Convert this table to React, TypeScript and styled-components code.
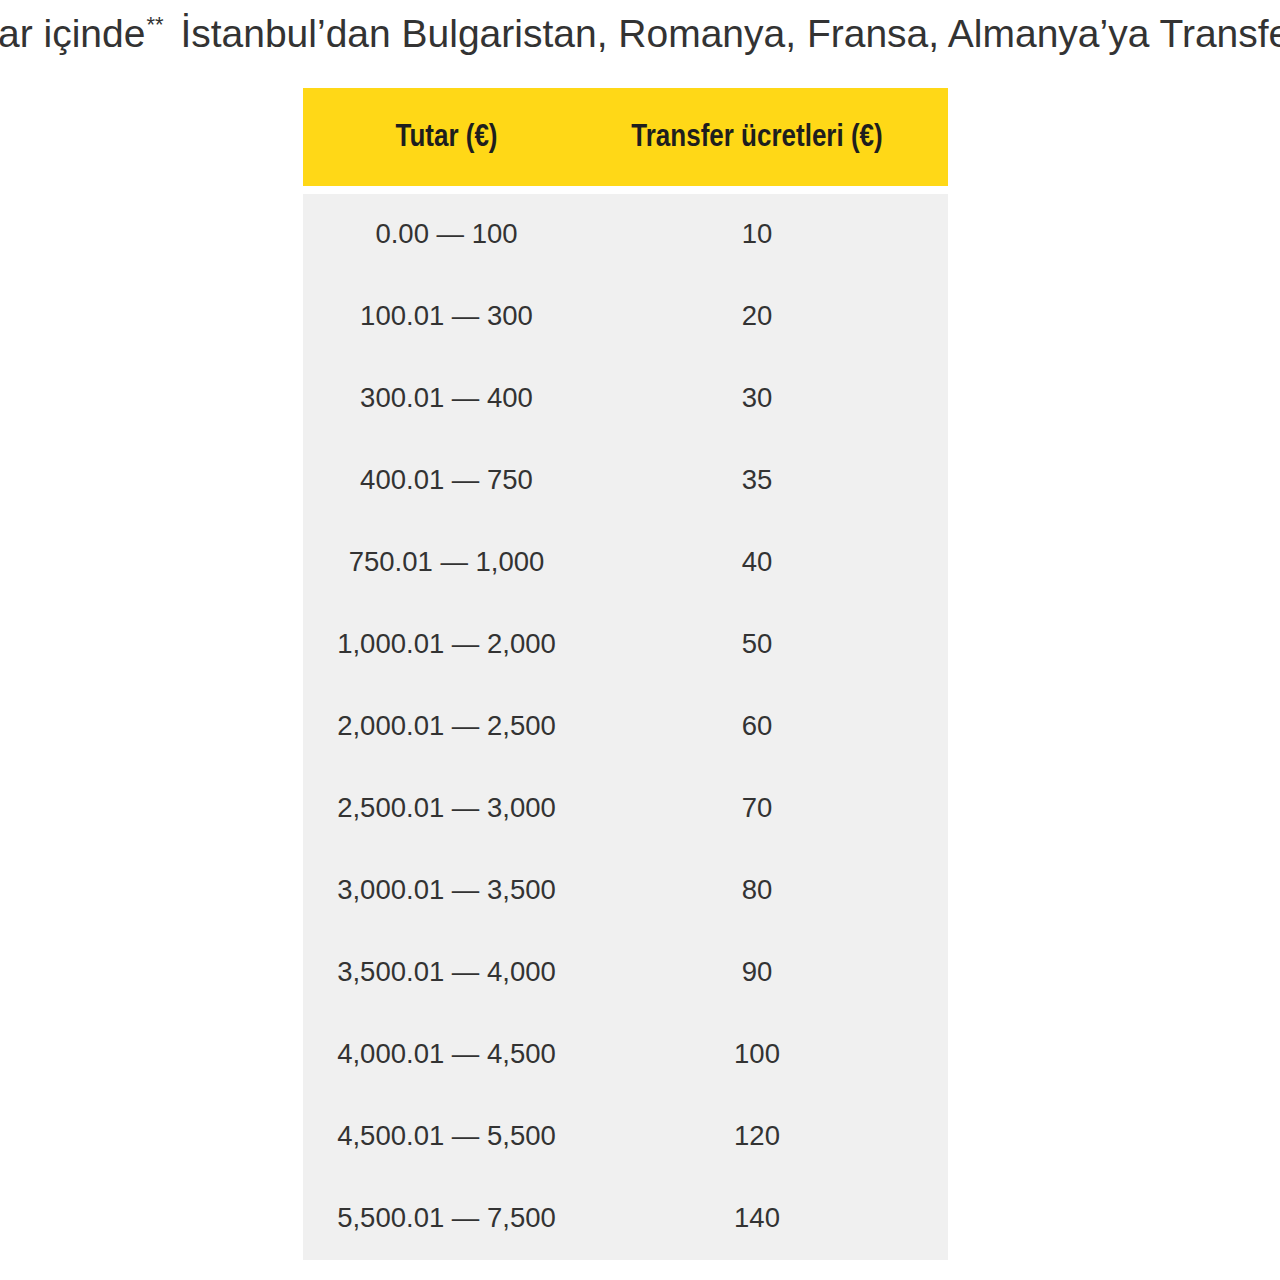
import React from "react";
import styled, { createGlobalStyle } from "styled-components";

const rows: [string, string][] = [
  ["0.00 — 100", "10"],
  ["100.01 — 300", "20"],
  ["300.01 — 400", "30"],
  ["400.01 — 750", "35"],
  ["750.01 — 1,000", "40"],
  ["1,000.01 — 2,000", "50"],
  ["2,000.01 — 2,500", "60"],
  ["2,500.01 — 3,000", "70"],
  ["3,000.01 — 3,500", "80"],
  ["3,500.01 — 4,000", "90"],
  ["4,000.01 — 4,500", "100"],
  ["4,500.01 — 5,500", "120"],
  ["5,500.01 — 7,500", "140"],
];

const App = () => {
  return (
    <>
      <GlobalStyle />
      <Page>
        <Heading>
          ar içinde<Sup>**</Sup> İstanbul’dan Bulgaristan, Romanya, Fransa, Almanya’ya Transfer
        </Heading>
        <FeeTable>
          <HeadRow>
            <HeadCell>
              <HeadText>Tutar (€)</HeadText>
            </HeadCell>
            <HeadCell>
              <HeadText>Transfer ücretleri (€)</HeadText>
            </HeadCell>
          </HeadRow>
          <Body>
            {rows.map(([range, fee]) => (
              <Row key={range}>
                <Cell>{range}</Cell>
                <Cell>{fee}</Cell>
              </Row>
            ))}
          </Body>
        </FeeTable>
      </Page>
    </>
  );
};
export default App;

const GlobalStyle = createGlobalStyle`
  html, body {
    margin: 0;
    padding: 0;
    background: #fff;
  }
  body {
    font-family: "Liberation Sans", Arial, sans-serif;
    color: #333;
  }
`;

const Page = styled.div`
  width: 1280px;
  height: 1280px;
  overflow: hidden;
  display: flex;
  flex-direction: column;
`;

const Heading = styled.p`
  margin: 11px 0 31px -2px;
  font-size: 39px;
  line-height: 46px;
  white-space: nowrap;
  color: #333;
`;

const Sup = styled.sup`
  font-size: 22px;
  line-height: 0;
  vertical-align: 15px;
  margin-left: 1px;
  margin-right: 6px;
`;

const FeeTable = styled.div`
  margin-left: 303px;
  width: 645px;
  display: flex;
  flex-direction: column;
  gap: 8px;
`;

const HeadRow = styled.div`
  display: grid;
  grid-template-columns: 287px 334px;
  height: 98px;
  padding-bottom: 3px;
  box-sizing: border-box;
  align-items: center;
  background: #ffd817;
`;

const HeadCell = styled.div`
  text-align: center;
`;

const HeadText = styled.span`
  display: inline-block;
  font-weight: bold;
  font-size: 26px;
  color: #1e1e1e;
  transform: scaleY(1.2);
`;

const Body = styled.div`
  display: flex;
  flex-direction: column;
  background: #f0f0f0;
`;

const Row = styled.div`
  display: grid;
  grid-template-columns: 287px 334px;
  height: 82px;
  padding-bottom: 3px;
  box-sizing: border-box;
  align-items: center;
`;

const Cell = styled.div`
  text-align: center;
  font-size: 27.5px;
  color: #333;
`;
